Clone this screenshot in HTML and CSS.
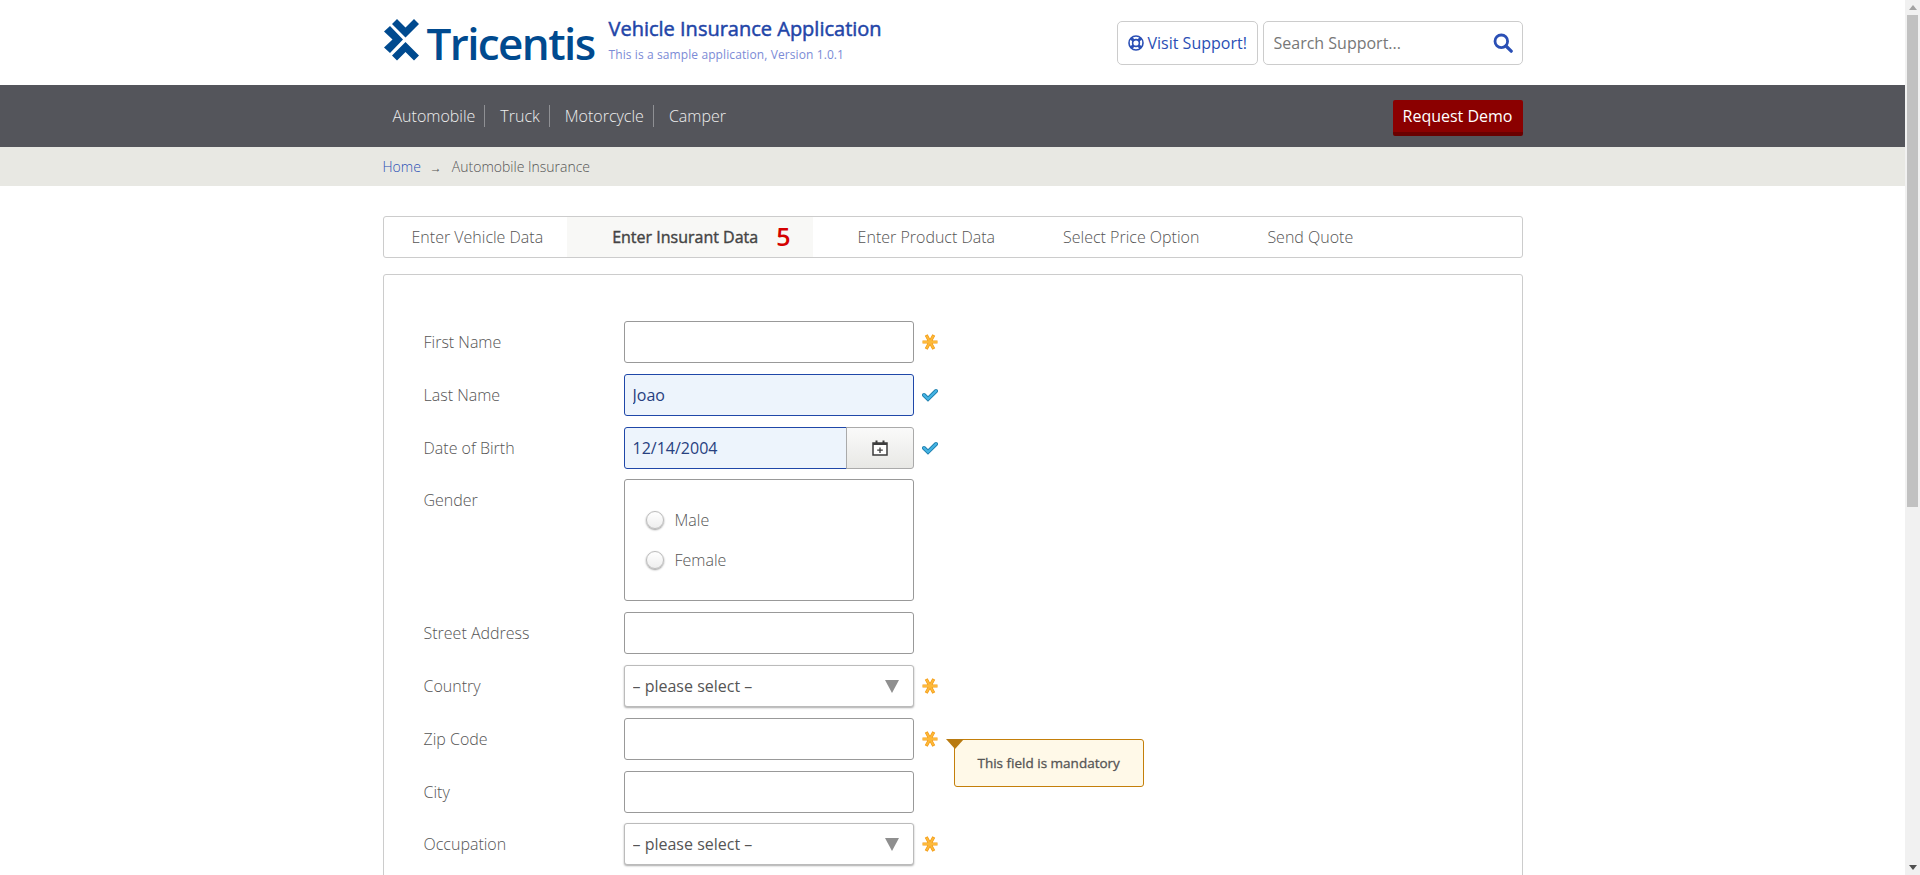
FILE: index.html
```html
<!DOCTYPE html>
<html lang="en">
  <head>
    <meta charset="UTF-8">
    <title>Vehicle Insurance Application</title>
    <link rel="stylesheet" href="styles.css">
  </head>
  <body>
    <div class="page">
      <header class="top wrap">
        <a class="logo" href="#">
          <svg class="logo-mark" viewBox="0 0 48 52" width="48" height="52">
            <polygon points="18,5 26.5,13.5 35,5 40,10 26.5,23.5 13,10"/>
            <polygon points="26.5,28 40,41.5 35,46.5 26.5,38 18,46.5 13,41.5"/>
            <polygon points="11,12 24,25.5 11,39 5,33.5 13.5,25.5 5,17.5"/>
          </svg>
          <span class="logo-text">Tricentis</span>
        </a>
        <div class="brand">
          <h1>Vehicle Insurance Application</h1>
          <p>This is a sample application, Version 1.0.1</p>
        </div>
        <a class="support" href="#">
          <svg viewBox="0 0 16 16" width="16" height="16" fill="none" stroke="#2a4fb5">
            <circle cx="8" cy="8" r="7" stroke-width="1.6"/>
            <circle cx="8" cy="8" r="3.4" stroke-width="1.6"/>
            <path d="M3 3l2.6 2.6M13 3l-2.6 2.6M3 13l2.6-2.6M13 13l-2.6-2.6" stroke-width="3"/>
          </svg>
          Visit Support!
        </a>
        <form class="search">
          <input type="text" placeholder="Search Support...">
          <svg viewBox="0 0 20 20" width="20" height="20">
            <circle cx="8.3" cy="8.3" r="6.3" fill="none" stroke="#2a4fb5" stroke-width="2.8"/>
            <path d="M13 13l5.2 5.2" stroke="#2a4fb5" stroke-width="3.2" stroke-linecap="round"/>
          </svg>
        </form>
      </header>

      <nav class="nav">
        <div class="wrap nav-in">
          <ul>
            <li><a href="#">Automobile</a></li>
            <li><a href="#">Truck</a></li>
            <li><a href="#">Motorcycle</a></li>
            <li><a href="#">Camper</a></li>
          </ul>
          <a class="demo" href="#">Request Demo</a>
        </div>
      </nav>

      <div class="crumbs">
        <div class="wrap crumbs-in">
          <a href="#">Home</a>
          <span class="crumb-arrow">&rarr;</span>
          <span>Automobile Insurance</span>
        </div>
      </div>

      <main class="wrap main">
        <div class="steps">
          <a class="step first" href="#">Enter Vehicle Data</a>
          <a class="step active" href="#">Enter Insurant Data <span class="count">5</span></a>
          <a class="step" href="#">Enter Product Data</a>
          <a class="step" href="#">Select Price Option</a>
          <a class="step" href="#">Send Quote</a>
        </div>

        <form class="panel">
          <div class="row">
            <label>First Name</label>
            <input class="field" type="text">
            <svg class="mark"><use href="#star"/></svg>
          </div>
          <div class="row">
            <label>Last Name</label>
            <input class="field filled" type="text" value="Joao">
            <svg class="mark"><use href="#tick"/></svg>
          </div>
          <div class="row">
            <label>Date of Birth</label>
            <div class="date">
              <input class="field filled" type="text" value="12/14/2004">
              <button class="cal" type="button">
                <svg viewBox="0 0 16 16" width="16" height="16">
                  <path d="M1 3h14v12H1z" fill="#fff" stroke="#3d3d3d" stroke-width="1.5"/>
                  <path d="M1 3h14v2H1z" fill="#3d3d3d"/>
                  <path d="M4.5 .5v3M11.5 .5v3" stroke="#3d3d3d" stroke-width="2"/>
                  <path d="M8 7.5v5.5M5.2 10.2h5.6" stroke="#3d3d3d" stroke-width="1.3"/>
                </svg>
              </button>
            </div>
            <svg class="mark"><use href="#tick"/></svg>
          </div>
          <div class="row">
            <label>Gender</label>
            <div class="group">
              <label class="choice"><input type="radio" name="gender"> Male</label>
              <label class="choice"><input type="radio" name="gender"> Female</label>
            </div>
          </div>
          <div class="row">
            <label>Street Address</label>
            <input class="field" type="text">
          </div>
          <div class="row">
            <label>Country</label>
            <div class="select"><select><option>– please select –</option></select></div>
            <svg class="mark"><use href="#star"/></svg>
          </div>
          <div class="row">
            <label>Zip Code</label>
            <input class="field" type="text">
            <svg class="mark"><use href="#star"/></svg>
            <div class="tip">This field is mandatory</div>
          </div>
          <div class="row">
            <label>City</label>
            <input class="field" type="text">
          </div>
          <div class="row">
            <label>Occupation</label>
            <div class="select"><select><option>– please select –</option></select></div>
            <svg class="mark"><use href="#star"/></svg>
          </div>
        </form>
      </main>
    </div>

    <div class="scrollbar">
      <span class="sb-btn up"></span>
      <span class="sb-thumb"></span>
      <span class="sb-btn down"></span>
    </div>

    <svg class="defs">
      <symbol id="star" viewBox="0 0 16 16">
        <path d="M.5 8h15M4.2 1l7.6 14M11.8 1l-7.6 14" stroke="#f39a12" stroke-width="3.2" fill="none"/>
        <path d="M1 8h14M4.5 1.6l7 12.8M11.5 1.6l-7 12.8" stroke="#fdb93a" stroke-width="1.9" fill="none"/>
      </symbol>
      <symbol id="tick" viewBox="0 0 16 16">
        <path d="M2 8l4 4 8-8" stroke="#1f7fae" stroke-width="4" fill="none" stroke-linecap="round"/>
        <path d="M2 8l4 4 8-8" stroke="#45b4e4" stroke-width="2.2" fill="none" stroke-linecap="round"/>
      </symbol>
    </svg>
  </body>
</html>
```

FILE: styles.css
```css
body {
  display: flex;
  height: 100vh;
  margin: 0;
  overflow: hidden;
  background: #fff;
  color: #555;
  font-family: "Open Sans", sans-serif;
  font-size: 16px;
}
a {
  text-decoration: none;
  color: inherit;
}
.page {
  flex: 1;
  min-width: 0;
  overflow: hidden;
}
.wrap {
  width: 1140px;
  margin: 0 auto;
}

/* drawn scrollbar, the page itself is clipped at the window */
.scrollbar {
  display: flex;
  flex: none;
  flex-direction: column;
  align-items: center;
  width: 15px;
  background: #f1f1f1;
}
.sb-btn {
  flex: none;
  width: 0;
  height: 0;
  border: solid transparent;
  border-width: 0 4px;
}
.sb-btn.up {
  margin: 5px 0 5px;
  border-bottom: 5px solid #a3a3a3;
}
.sb-btn.down {
  margin: auto 0 5px;
  border-top: 5px solid #505050;
}
.sb-thumb {
  width: 11px;
  height: 492px;
  background: #c1c1c1;
}

/* header */
.top {
  display: flex;
  align-items: center;
  height: 85px;
}
.logo {
  display: flex;
  align-items: center;
  width: 226px;
  height: 52px;
}
.logo-mark {
  flex: none;
  margin: -5px 0 0 -4px;
  fill: #004a8f;
}
.logo-text {
  color: #004a8f;
  font-size: 44px;
  font-weight: 600;
  letter-spacing: -1.6px;
}
.brand {
  flex: 1;
  padding-bottom: 4px;
}
.brand h1 {
  margin: 0;
  color: #1f45a8;
  font-size: 20px;
  font-weight: 400;
  line-height: 28px;
  -webkit-text-stroke: .5px #1f45a8;
}
.brand p {
  margin: 0;
  color: #7b8bd6;
  font-size: 12px;
  letter-spacing: .1px;
  line-height: 24px;
}
.support {
  display: flex;
  align-items: center;
  gap: 4px;
  box-sizing: border-box;
  height: 44px;
  width: 141px;
  padding-left: 10px;
  border: 1px solid #ccc;
  border-radius: 5px;
  color: #2a4fb5;
}
.search {
  display: flex;
  align-items: center;
  box-sizing: border-box;
  width: 260px;
  height: 44px;
  margin-left: 5px;
  padding: 0 9px 0 10px;
  border: 1px solid #ccc;
  border-radius: 5px;
}
.search input {
  flex: 1;
  min-width: 0;
  border: 0;
  outline: 0;
  padding: 0;
  color: #555;
  font: inherit;
}
.search input::placeholder {
  color: #777;
}

/* nav */
.nav {
  height: 62px;
  background: #54555b;
}
.nav-in {
  display: flex;
  justify-content: space-between;
}
.nav ul {
  display: flex;
  margin: 0;
  padding: 20px 0 0;
  list-style: none;
}
.nav li {
  height: 22px;
  padding: 0 9px 0 15px;
  border-right: 1px solid #8f9094;
  color: #eee;
  font-weight: 300;
  line-height: 22px;
}
.nav li:first-child {
  padding-left: 10px;
}
.nav li:last-child {
  border: 0;
}
.demo {
  box-sizing: border-box;
  height: 36px;
  margin-top: 15px;
  padding: 0 10px;
  background: #8b0000;
  border-bottom: 4px solid #6a0000;
  border-radius: 2px;
  color: #fff;
  line-height: 32px;
}

/* breadcrumb */
.crumbs {
  height: 39px;
  background: #e8e8e3;
  font-size: 14px;
  font-weight: 300;
}
.crumbs-in {
  display: flex;
  align-items: center;
  height: 100%;
}
.crumbs a {
  color: #2a4fb5;
}
.crumb-arrow {
  margin: 2px 10px 0 9px;
  font-size: 12px;
}

/* steps */
.main {
  padding-top: 30px;
}
.steps {
  display: flex;
  box-sizing: border-box;
  height: 42px;
  border: 1px solid #ccc;
  border-radius: 3px;
}
.step {
  padding: 0 34px;
  font-weight: 300;
  line-height: 40px;
}
.step.first {
  padding-left: 28px;
}
.step.active {
  margin: 0 11px 0 -10px;
  padding: 0 22px 0 45px;
  background: #f8f8f6;
  color: #444;
  font-weight: 400;
  -webkit-text-stroke: .4px #444;
}
.count {
  margin-left: 14px;
  color: #d40000;
  font-size: 25px;
  font-weight: 600;
  line-height: 38px;
  vertical-align: top;
  -webkit-text-stroke: 0;
}

/* form */
.panel {
  margin-top: 16px;
  padding: 46px 40px 40px;
  border: 1px solid #ccc;
  border-radius: 3px;
}
.row {
  position: relative;
  display: flex;
  align-items: flex-start;
  margin-bottom: 10.8px;
}
.row > label {
  flex: none;
  width: 200px;
  font-weight: 300;
  line-height: 42px;
}
.field {
  box-sizing: border-box;
  width: 290px;
  height: 42px;
  padding: 0 8px;
  border: 1px solid #999;
  border-radius: 3px;
  outline: 0;
  background: #fff;
  font: inherit;
}
.field.filled {
  border-color: #1f47a8;
  background: #edf4fc;
  color: #27407f;
}
.mark {
  flex: none;
  width: 16px;
  height: 16px;
  margin: 13px 0 0 8px;
}
.date {
  display: flex;
  width: 290px;
}
.date .field {
  flex: 1;
  min-width: 0;
  border-radius: 3px 0 0 3px;
}
.cal {
  flex: none;
  width: 68px;
  height: 42px;
  margin-left: -1px;
  padding: 3px 0 0;
  border: 1px solid #aaa;
  border-radius: 0 3px 3px 0;
  background: linear-gradient(#fafafa, #e8e8e5);
}
.group {
  box-sizing: border-box;
  width: 290px;
  height: 122px;
  padding: 20px 0 0 21px;
  border: 1px solid #999;
  border-radius: 3px;
}
.choice {
  display: flex;
  align-items: center;
  gap: 11px;
  height: 40px;
  font-weight: 300;
}
.choice input {
  appearance: none;
  flex: none;
  width: 18px;
  height: 18px;
  margin: 0;
  border: 1px solid #bbb;
  border-radius: 50%;
  background: linear-gradient(#fff, #eee);
  box-shadow: 0 1px 2px #999;
}
.select {
  position: relative;
  width: 290px;
}
.select::after {
  content: "";
  position: absolute;
  top: 15px;
  right: 15px;
  border: solid transparent;
  border-width: 13px 7.5px 0;
  border-top-color: #8f8f8f;
  pointer-events: none;
}
.select select {
  appearance: none;
  box-sizing: border-box;
  width: 100%;
  height: 42px;
  padding: 0 8px;
  border: 1px solid #bbb;
  border-radius: 3px;
  background: #fff;
  box-shadow: 0 1px 2px #aaa;
  color: #555;
  font: inherit;
}

/* mandatory tooltip */
.tip {
  position: absolute;
  top: 21px;
  left: 530px;
  box-sizing: border-box;
  width: 190px;
  height: 48px;
  padding-left: 23px;
  background: #fff9e8;
  border: 1px solid #c47f0a;
  border-radius: 3px;
  color: #555;
  font-size: 13.5px;
  line-height: 46px;
  -webkit-text-stroke: .3px #555;
}
.tip::before {
  content: "";
  position: absolute;
  top: -1px;
  left: -9px;
  border: solid transparent;
  border-width: 10px 9px 0;
  border-top-color: #b87a10;
}

.defs {
  display: none;
}
```
